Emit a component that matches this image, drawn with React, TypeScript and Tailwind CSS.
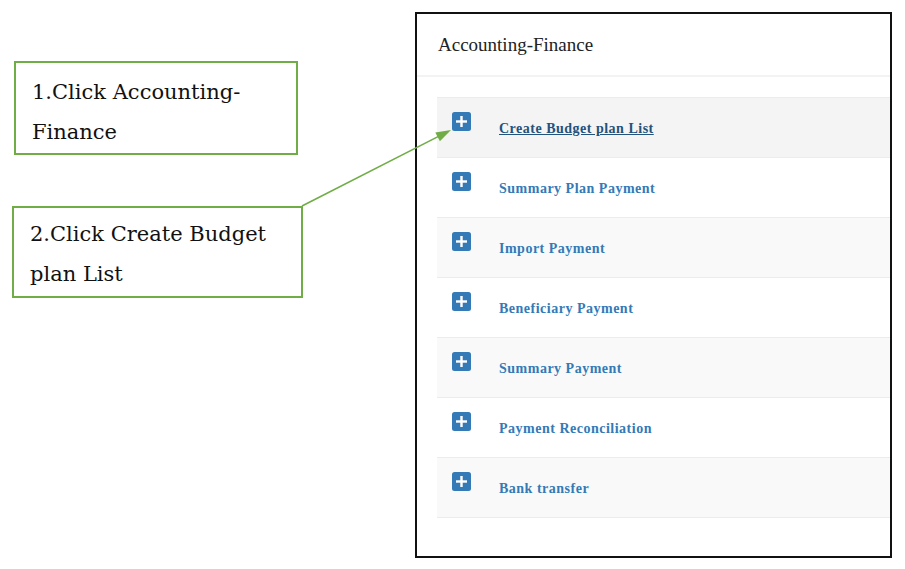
import React from "react";

const items = [
  "Create Budget plan List",
  "Summary Plan Payment",
  "Import Payment",
  "Beneficiary Payment",
  "Summary Payment",
  "Payment Reconciliation",
  "Bank transfer",
];

const rowBg = [
  "bg-[#f4f4f4]",
  "bg-white",
  "bg-[#f9f9f9]",
  "bg-white",
  "bg-[#f9f9f9]",
  "bg-white",
  "bg-[#f9f9f9]",
];

function PlusIcon() {
  return (
    <svg width="19" height="19" viewBox="0 0 19 19" className="shrink-0">
      <rect x="0" y="0" width="19" height="19" rx="2.5" fill="#337ab7" />
      <rect x="8.3" y="4" width="2.4" height="11" fill="#ffffff" />
      <rect x="4" y="8.3" width="11" height="2.4" fill="#ffffff" />
    </svg>
  );
}

export default function App() {
  return (
    <div className="relative w-[905px] h-[569px] bg-white flex overflow-hidden">
      {/* Left annotations */}
      <div className="w-[415px] shrink-0 flex flex-col">
        <div
          className="ml-[14px] mt-[61px] w-[284px] h-[94px] border-2 border-[#70ad47] pl-[16px] pt-[9px] text-[21px] leading-[40px] text-[#111] [font-family:'DejaVu_Serif',serif]"
        >
          1.Click Accounting-
          <br />
          Finance
        </div>
        <div
          className="ml-[12px] mt-[51px] w-[291px] h-[92px] border-2 border-[#70ad47] pl-[16px] pt-[6px] text-[21px] leading-[40px] text-[#111] [font-family:'DejaVu_Serif',serif]"
        >
          2.Click Create Budget
          <br />
          plan List
        </div>
      </div>

      {/* Screenshot frame */}
      <div className="mt-[12px] w-[477px] h-[546px] border-2 border-[#111] flex flex-col [font-family:'Liberation_Serif',serif]">
        <div className="h-[63px] shrink-0 border-b-2 border-[#f3f3f3] pl-[21px] pt-[20px] text-[19px] leading-[22px] text-[#222]">
          Accounting-Finance
        </div>
        <div className="mt-[20px] ml-[20px] flex flex-col">
          {items.map((label, i) => (
            <div
              key={label}
              className={`h-[60px] border-t border-[#ececec] ${
                i === items.length - 1 ? "border-b h-[61px]" : ""
              } ${rowBg[i]} flex items-start pt-[14px] pl-[15px]`}
            >
              <PlusIcon />
              <span
                className={`ml-[28px] mt-[7px] text-[14px] leading-[20px] font-bold tracking-[0.5px] ${
                  i === 0 ? "text-[#23527c] underline" : "text-[#337ab7]"
                }`}
              >
                {label}
              </span>
            </div>
          ))}
        </div>
      </div>

      {/* Arrow overlay */}
      <svg
        className="absolute inset-0 pointer-events-none"
        width="905"
        height="569"
        viewBox="0 0 905 569"
      >
        <line
          x1="302"
          y1="206"
          x2="440"
          y2="135.6"
          stroke="#70ad47"
          strokeWidth="1.6"
        />
        <polygon points="451,130 435.3,132.4 439.9,141.3" fill="#70ad47" />
      </svg>
    </div>
  );
}
